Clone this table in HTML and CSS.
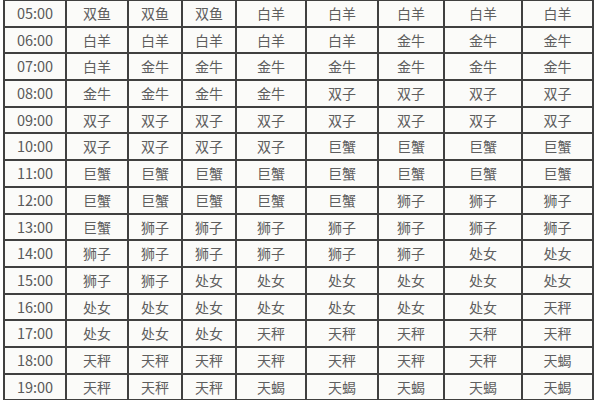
FILE: index.html
```html
<!DOCTYPE html>
<html lang="zh">
<head>
<meta charset="utf-8">
<link rel="stylesheet" href="styles.css">
</head>
<body>
<div class="table">
<div class="t">05:00</div><div>双鱼</div><div>双鱼</div><div>双鱼</div><div>白羊</div><div>白羊</div><div>白羊</div><div>白羊</div><div>白羊</div>
<div class="t">06:00</div><div>白羊</div><div>白羊</div><div>白羊</div><div>白羊</div><div>白羊</div><div>金牛</div><div>金牛</div><div>金牛</div>
<div class="t">07:00</div><div>白羊</div><div>金牛</div><div>金牛</div><div>金牛</div><div>金牛</div><div>金牛</div><div>金牛</div><div>金牛</div>
<div class="t">08:00</div><div>金牛</div><div>金牛</div><div>金牛</div><div>金牛</div><div>双子</div><div>双子</div><div>双子</div><div>双子</div>
<div class="t">09:00</div><div>双子</div><div>双子</div><div>双子</div><div>双子</div><div>双子</div><div>双子</div><div>双子</div><div>双子</div>
<div class="t">10:00</div><div>双子</div><div>双子</div><div>双子</div><div>双子</div><div>巨蟹</div><div>巨蟹</div><div>巨蟹</div><div>巨蟹</div>
<div class="t">11:00</div><div>巨蟹</div><div>巨蟹</div><div>巨蟹</div><div>巨蟹</div><div>巨蟹</div><div>巨蟹</div><div>巨蟹</div><div>巨蟹</div>
<div class="t">12:00</div><div>巨蟹</div><div>巨蟹</div><div>巨蟹</div><div>巨蟹</div><div>巨蟹</div><div>狮子</div><div>狮子</div><div>狮子</div>
<div class="t">13:00</div><div>巨蟹</div><div>狮子</div><div>狮子</div><div>狮子</div><div>狮子</div><div>狮子</div><div>狮子</div><div>狮子</div>
<div class="t">14:00</div><div>狮子</div><div>狮子</div><div>狮子</div><div>狮子</div><div>狮子</div><div>狮子</div><div>处女</div><div>处女</div>
<div class="t">15:00</div><div>狮子</div><div>狮子</div><div>处女</div><div>处女</div><div>处女</div><div>处女</div><div>处女</div><div>处女</div>
<div class="t">16:00</div><div>处女</div><div>处女</div><div>处女</div><div>处女</div><div>处女</div><div>处女</div><div>处女</div><div>天秤</div>
<div class="t">17:00</div><div>处女</div><div>处女</div><div>处女</div><div>天秤</div><div>天秤</div><div>天秤</div><div>天秤</div><div>天秤</div>
<div class="t">18:00</div><div>天秤</div><div>天秤</div><div>天秤</div><div>天秤</div><div>天秤</div><div>天秤</div><div>天秤</div><div>天蝎</div>
<div class="t">19:00</div><div>天秤</div><div>天秤</div><div>天秤</div><div>天蝎</div><div>天蝎</div><div>天蝎</div><div>天蝎</div><div>天蝎</div>
</div>
</body>
</html>
```
FILE: styles.css
```css
html, body {
  margin: 0;
  padding: 0;
  background: #ffffff;
  overflow: hidden;
}
.table {
  display: grid;
  grid-template-columns: 60px 60px 52px 52px 68px 70px 64px 76px 69px;
  grid-auto-rows: 24.7px;
  gap: 2px;
  padding: 1px 2px 2px 2px;
  margin-left: 3px;
  width: max-content;
  background: #404040;
}
.table > div {
  background: #fbfbf9;
  color: #5e5e5e;
  font-family: "Noto Sans CJK SC", sans-serif;
  font-size: 14px;
  line-height: 24.7px;
  text-align: center;
  white-space: nowrap;
}
.table > .t {
  font-size: 14.5px;
  color: #5a5a5a;
}
```
